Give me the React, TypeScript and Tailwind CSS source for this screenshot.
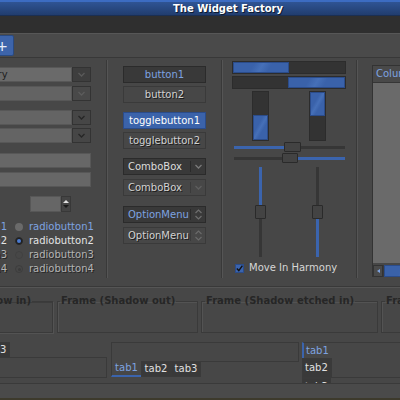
import React from "react";

// shared styles
const insensitive = "text-[#d2d2d2] [text-shadow:1px_1px_0_#1b1b1b]";
const blueFill =
  "bg-[linear-gradient(120deg,#3a62aa_35%,#4670b8_50%,#3a62aa_65%)] border border-[#2b4c8a]";

function Chevron({ color }: { color: string }) {
  return (
    <svg width="7" height="5" viewBox="0 0 7 5">
      <path d="M0.5 1l3 3 3-3" fill="none" stroke={color} strokeWidth="1.3" />
    </svg>
  );
}

function UpDown({ color }: { color: string }) {
  return (
    <svg width="7" height="11" viewBox="0 0 7 11">
      <path d="M0.5 4l3-3 3 3M0.5 7l3 3 3-3" fill="none" stroke={color} strokeWidth="1.2" />
    </svg>
  );
}

interface ComboProps {
  text?: string;
  entryBg: string;
  btnBg: string;
  arrow: string;
}

function ComboEntry({ text, entryBg, btnBg, arrow }: ComboProps) {
  return (
    <div className="-ml-[24px] flex h-[15px]">
      <div className={`flex flex-1 items-center border border-[#575757] pl-[4px] text-[#1e1e1e] ${entryBg}`}>
        {text}
      </div>
      <div className={`flex w-[19px] items-center justify-center border border-[#333333] ${btnBg}`}>
        <Chevron color={arrow} />
      </div>
    </div>
  );
}

const radioRows = [
  { check: "checkbutton1", label: "radiobutton1", text: "text-[#7ea3e0]", kind: "hover" },
  { check: "checkbutton2", label: "radiobutton2", text: "text-[#e4e4e4]", kind: "active" },
  { check: "checkbutton3", label: "radiobutton3", text: "text-[#b4b4b4] [text-shadow:1px_1px_0_#262626]", kind: "off" },
  { check: "checkbutton4", label: "radiobutton4", text: "text-[#b4b4b4] [text-shadow:1px_1px_0_#262626]", kind: "mixed" },
];

function Radio({ kind }: { kind: string }) {
  if (kind === "hover") return <span className="ml-[8px] h-[8px] w-[8px] shrink-0 rounded-full bg-[#6a6a6a]" />;
  if (kind === "active")
    return (
      <span className="ml-[8px] flex h-[8px] w-[8px] shrink-0 items-center justify-center rounded-full border border-[#2a2a2a] bg-[#1f1f1f]">
        <span className="h-[4px] w-[4px] rounded-full bg-[#4a7ad0]" />
      </span>
    );
  if (kind === "mixed")
    return (
      <span className="ml-[8px] flex h-[8px] w-[8px] shrink-0 items-center justify-center rounded-full border border-[#3d3d3d]">
        <span className="h-[3px] w-[3px] rounded-full bg-[#3b3b3b]" />
      </span>
    );
  return <span className="ml-[8px] h-[8px] w-[8px] shrink-0 rounded-full border border-[#414141]" />;
}

function VSep() {
  return <div className="mt-[2px] h-[218px] w-[2px] shrink-0 border-l border-r border-l-[#393939] border-r-[#555555]" />;
}

const App = () => {
  return (
    <div className="h-[400px] w-[400px] overflow-hidden bg-[#474747] font-['DejaVu_Sans',sans-serif] text-[10px] leading-none">
      {/* Title bar */}
      <div className="flex h-[16px] items-center justify-center border-t-2 border-b border-t-[#3c6cc2] border-b-[#1b2f52] bg-[linear-gradient(#2f5494,#213d6e)] pl-[56px] font-bold text-white [text-shadow:1px_1px_0_#0d1a30]">
        The Widget Factory
      </div>

      {/* Menu bar */}
      <div className="h-[17px] bg-[#2f2f2f]" />

      {/* Toolbar */}
      <div className="h-[25px] border-t border-b border-t-[#575757] border-b-[#383838] bg-[#4a4a4a] pt-px">
        <div className="-ml-[10px] flex h-[21px] w-[24px] items-center justify-center rounded-[2px] border border-[#2a4a80] bg-[#3d64aa] text-[14px] text-[#e8eefa]">
          +
        </div>
      </div>

      {/* Main columns */}
      <div className="flex h-[228px]">
        {/* Column A: entries and toggles */}
        <div className="flex w-[106px] shrink-0 flex-col pr-[15px]">
          <div className="mt-[9px]">
            <ComboEntry text="Entry" entryBg="bg-[#6a6a6a]" btnBg="bg-[#3e3e3e]" arrow="#5a5a5a" />
          </div>
          <div className="mt-[4px]">
            <ComboEntry entryBg="bg-[#636363]" btnBg="bg-[#494949]" arrow="#5c5c5c" />
          </div>
          <div className="mt-[9px]">
            <ComboEntry entryBg="bg-[#646464]" btnBg="bg-[#464646]" arrow="#262626" />
          </div>
          <div className="mt-[3px]">
            <ComboEntry entryBg="bg-[#646464]" btnBg="bg-[#464646]" arrow="#262626" />
          </div>

          <div className="mt-[10px] -ml-[24px] h-[15px] border border-[#575757] bg-[#676767]" />
          <div className="mt-[4px] -ml-[24px] h-[15px] border border-[#575757] bg-[#676767]" />

          <div className="ml-[30px] mt-[9px] flex h-[16px] w-[41px]">
            <div className="flex-1 border border-[#575757] bg-[#666666]" />
            <div className="flex w-[10px] flex-col items-center justify-center gap-[2px] border border-[#383838] bg-[#444444]">
              <span className="h-0 w-0 border-x-[3px] border-b-[3px] border-x-transparent border-b-[#e0e0e0]" />
              <span className="h-0 w-0 border-x-[3px] border-t-[3px] border-x-transparent border-t-[#1a1a1a]" />
            </div>
          </div>

          <div className="mt-[8px] flex flex-col">
            {radioRows.map((r) => (
              <div key={r.label} className="-ml-[80px] flex h-[14px] shrink-0 items-center">
                <span className={`w-[87px] shrink-0 whitespace-nowrap text-right ${r.text}`}>{r.check}</span>
                <Radio kind={r.kind} />
                <span className={`ml-[6px] whitespace-nowrap ${r.text}`}>{r.label}</span>
              </div>
            ))}
          </div>
        </div>

        <VSep />

        {/* Column B: buttons */}
        <div className="ml-[15px] flex w-[83px] shrink-0 flex-col">
          <button className="mt-[8px] h-[17px] border border-[#2b2b2b] bg-[#393939] text-[#7ea3e0]">button1</button>
          <button className={`mt-[3px] h-[17px] border border-[#3a3a3a] bg-[#474747] ${insensitive}`}>button2</button>
          <button className="mt-[9px] h-[17px] border border-[#2b4c8a] bg-[#3b63aa] text-white">togglebutton1</button>
          <button className={`mt-[3px] h-[17px] border border-[#3a3a3a] bg-[#474747] ${insensitive}`}>togglebutton2</button>

          <div className="mt-[9px] flex h-[17px] items-center border border-[#2b2b2b] bg-[#393939] text-[#dcdcdc]">
            <span className="flex-1 pl-[4px]">ComboBox</span>
            <span className="h-[11px] w-px bg-[#2a2a2a]" />
            <span className="flex w-[14px] justify-center"><Chevron color="#7a7a7a" /></span>
          </div>
          <div className="mt-[4px] flex h-[17px] items-center border border-[#3a3a3a] bg-[#474747]">
            <span className={`flex-1 pl-[4px] ${insensitive}`}>ComboBox</span>
            <span className="h-[11px] w-px bg-[#3a3a3a]" />
            <span className="flex w-[14px] justify-center"><Chevron color="#5e5e5e" /></span>
          </div>

          <div className="mt-[10px] flex h-[17px] items-center border border-[#2b2b2b] bg-[#393939] text-[#7ea3e0]">
            <span className="flex-1 pl-[4px]">OptionMenu</span>
            <span className="h-[11px] w-px bg-[#2a2a2a]" />
            <span className="flex w-[14px] justify-center"><UpDown color="#6e6e6e" /></span>
          </div>
          <div className="mt-[4px] flex h-[17px] items-center border border-[#3a3a3a] bg-[#474747]">
            <span className={`flex-1 pl-[4px] ${insensitive}`}>OptionMenu</span>
            <span className="h-[11px] w-px bg-[#3a3a3a]" />
            <span className="flex w-[14px] justify-center"><UpDown color="#6a6a6a" /></span>
          </div>
        </div>

        <div className="ml-[15px]">
          <VSep />
        </div>

        {/* Column C: progress bars and sliders */}
        <div className="ml-[9px] flex w-[114px] shrink-0 flex-col">
          <div className="mt-[3px] flex h-[13px] shrink-0 border border-[#2c2c2c] bg-[#333333]">
            <div className={`w-[56px] ${blueFill}`} />
          </div>
          <div className="mt-[2px] flex h-[13px] shrink-0 justify-end border border-[#2c2c2c] bg-[#333333]">
            <div className={`w-[57px] ${blueFill}`} />
          </div>

          <div className="mt-[2px] flex h-[50px] shrink-0">
            <div className="ml-[20px] flex w-[17px] flex-col justify-end border border-[#2c2c2c] bg-[#333333]">
              <div className={`h-[25px] ${blueFill}`} />
            </div>
            <div className="ml-[40px] flex w-[17px] flex-col border border-[#2c2c2c] bg-[#333333]">
              <div className={`h-[24px] ${blueFill}`} />
            </div>
          </div>

          <div className="ml-[2px] mr-px mt-px flex h-[10px] shrink-0 items-center">
            <div className="h-[3px] w-[50px] bg-[#3b64ad]" />
            <div className="h-[10px] w-[17px] rounded-[1px] border border-[#2a2a2a] bg-[#434343]" />
            <div className="h-[3px] flex-1 bg-[#363636]" />
          </div>
          <div className="ml-[2px] mr-px mt-px flex h-[10px] shrink-0 items-center">
            <div className="h-[3px] w-[48px] bg-[#363636]" />
            <div className="h-[10px] w-[16px] rounded-[1px] border border-[#2a2a2a] bg-[#434343]" />
            <div className="h-[3px] flex-1 bg-[#3b64ad]" />
          </div>

          <div className="mt-[4px] flex h-[90px] shrink-0">
            <div className="ml-[23px] flex w-[11px] flex-col items-center">
              <div className="h-[38px] w-[3px] bg-[#3b64ad]" />
              <div className="h-[14px] w-[11px] rounded-[1px] border border-[#2a2a2a] bg-[#434343]" />
              <div className="w-[3px] flex-1 bg-[#363636]" />
            </div>
            <div className="ml-[46px] flex w-[11px] flex-col items-center">
              <div className="h-[38px] w-[3px] bg-[#363636]" />
              <div className="h-[14px] w-[11px] rounded-[1px] border border-[#2a2a2a] bg-[#434343]" />
              <div className="w-[3px] flex-1 bg-[#3b64ad]" />
            </div>
          </div>

          <div className="mt-[6px] flex items-center">
            <span className="ml-[3px] flex h-[9px] w-[9px] items-center justify-center border border-[#2b4c8a] bg-[#3b64ad]">
              <svg width="7" height="7" viewBox="0 0 7 7">
                <path d="M0.8 3.6l2 2 3.6-5" fill="none" stroke="#111" strokeWidth="1.4" />
              </svg>
            </span>
            <span className="ml-[5px] whitespace-nowrap text-[#d6d6d6]">Move In Harmony</span>
          </div>
        </div>

        <div className="ml-[10px]">
          <VSep />
        </div>

        {/* Column D: tree view */}
        <div className="ml-[14px] mt-[7px] flex h-[212px] w-[60px] shrink-0 flex-col border-l border-t border-[#333333]">
          <div className="flex h-[17px] shrink-0 items-center border-b border-[#363636] bg-[#494949] pl-[3px] text-[#7ea3e0]">
            Column
          </div>
          <div className="flex-1 bg-[#6a6a6a]" />
          <div className="mt-[2px] flex h-[12px] shrink-0 bg-[#3a3a3a]">
            <div className="flex w-[10px] items-center justify-center border border-[#333333] bg-[#4a4a4a]">
              <span className="h-0 w-0 border-y-[2px] border-r-[3px] border-y-transparent border-r-[#7ea3e0]" />
            </div>
            <div className={`ml-px flex-1 ${blueFill}`} />
          </div>
        </div>
      </div>

      {/* Horizontal separator */}
      <div className="h-[2px] border-t border-b border-t-[#393939] border-b-[#555555]" />

      {/* Frames */}
      <div className="mt-[8px] flex gap-[3px] whitespace-nowrap font-bold text-[#262626]">
        <fieldset className="-ml-[80px] mr-px h-[37px] w-[133px] shrink-0 border border-[#3a3a3a] shadow-[inset_1px_1px_0_#3c3c3c,1px_1px_0_#535353]">
          <legend className="ml-[3px] px-[1px]">Frame (Shadow in)</legend>
        </fieldset>
        <fieldset className="h-[37px] w-[141px] shrink-0 border border-[#3a3a3a] shadow-[inset_1px_1px_0_#535353]">
          <legend className="ml-[2px] px-[1px]">Frame (Shadow out)</legend>
        </fieldset>
        <fieldset className="h-[37px] w-[177px] shrink-0 border border-[#3a3a3a] shadow-[inset_1px_1px_0_#535353]">
          <legend className="ml-[3px] px-[1px]">Frame (Shadow etched in)</legend>
        </fieldset>
        <fieldset className="h-[37px] w-[180px] shrink-0 border border-[#3a3a3a] shadow-[inset_1px_1px_0_#535353]">
          <legend className="ml-[3px] px-[1px]">Frame (Shadow etched out)</legend>
        </fieldset>
      </div>

      {/* Notebooks */}
      <div className="mt-[9px] flex h-[41px] overflow-hidden">
        {/* tabs on top */}
        <div className="-ml-[80px] flex w-[187px] shrink-0 flex-col">
          <div className="flex h-[16px] shrink-0">
            <div className="flex w-[30px] items-center justify-center border-l border-r border-t border-[#3a3a3a] text-[#7ea3e0]">tab1</div>
            <div className="flex w-[30px] items-center justify-center border border-[#3a3a3a] bg-[#393939] text-[#e0e0e0]">tab2</div>
            <div className="flex w-[30px] items-center justify-center border border-[#3a3a3a] bg-[#393939] text-[#e0e0e0]">tab3</div>
            <div className="flex-1 border-b border-[#3a3a3a]" />
          </div>
          <div className="h-[20px] shrink-0 border-b border-l border-r border-[#3a3a3a]" />
        </div>

        {/* tabs at bottom */}
        <div className="ml-[4px] flex w-[188px] shrink-0 flex-col">
          <div className="h-[19px] shrink-0 border-l border-r border-t border-[#3a3a3a]" />
          <div className="flex h-[16px] shrink-0">
            <div className="flex w-[30px] items-center justify-center border-b-2 border-l border-b-[#3b64ad] border-l-[#3a3a3a] text-[#7ea3e0]">tab1</div>
            <div className="flex w-[30px] items-center justify-center border border-[#3a3a3a] bg-[#393939] text-[#e0e0e0]">tab2</div>
            <div className="flex w-[30px] items-center justify-center border border-[#3a3a3a] bg-[#393939] text-[#e0e0e0]">tab3</div>
            <div className="h-0 flex-1 border-t border-[#3a3a3a]" />
          </div>
        </div>

        {/* tabs on the left */}
        <div className="ml-[3px] flex flex-1">
          <div className="flex w-[29px] shrink-0 flex-col">
            <div className="flex h-[16px] shrink-0 items-center border-l-2 border-t border-l-[#3b64ad] border-t-[#3a3a3a] pl-[2px] text-[#7ea3e0]">tab1</div>
            <div className="flex h-[20px] shrink-0 items-center border border-[#3a3a3a] bg-[#393939] pl-[2px] text-[#e0e0e0]">tab2</div>
            <div className="flex h-[18px] shrink-0 items-center border border-[#3a3a3a] bg-[#393939] pl-[2px] text-[#e0e0e0]">tab3</div>
          </div>
          <div className="flex flex-1 flex-col">
            <div className="h-[16px] shrink-0 border-t border-[#3a3a3a]" />
            <div className="h-[20px] shrink-0 border-b border-l border-[#3a3a3a]" />
          </div>
        </div>
      </div>

      {/* Status area */}
      <div className="h-[17px] border-t border-[#3a3a3a] bg-[#4a4a4a]">
        <div className="mt-[14px] h-[2px] bg-[#3d3a2c]" />
      </div>
    </div>
  );
};

export default App;
